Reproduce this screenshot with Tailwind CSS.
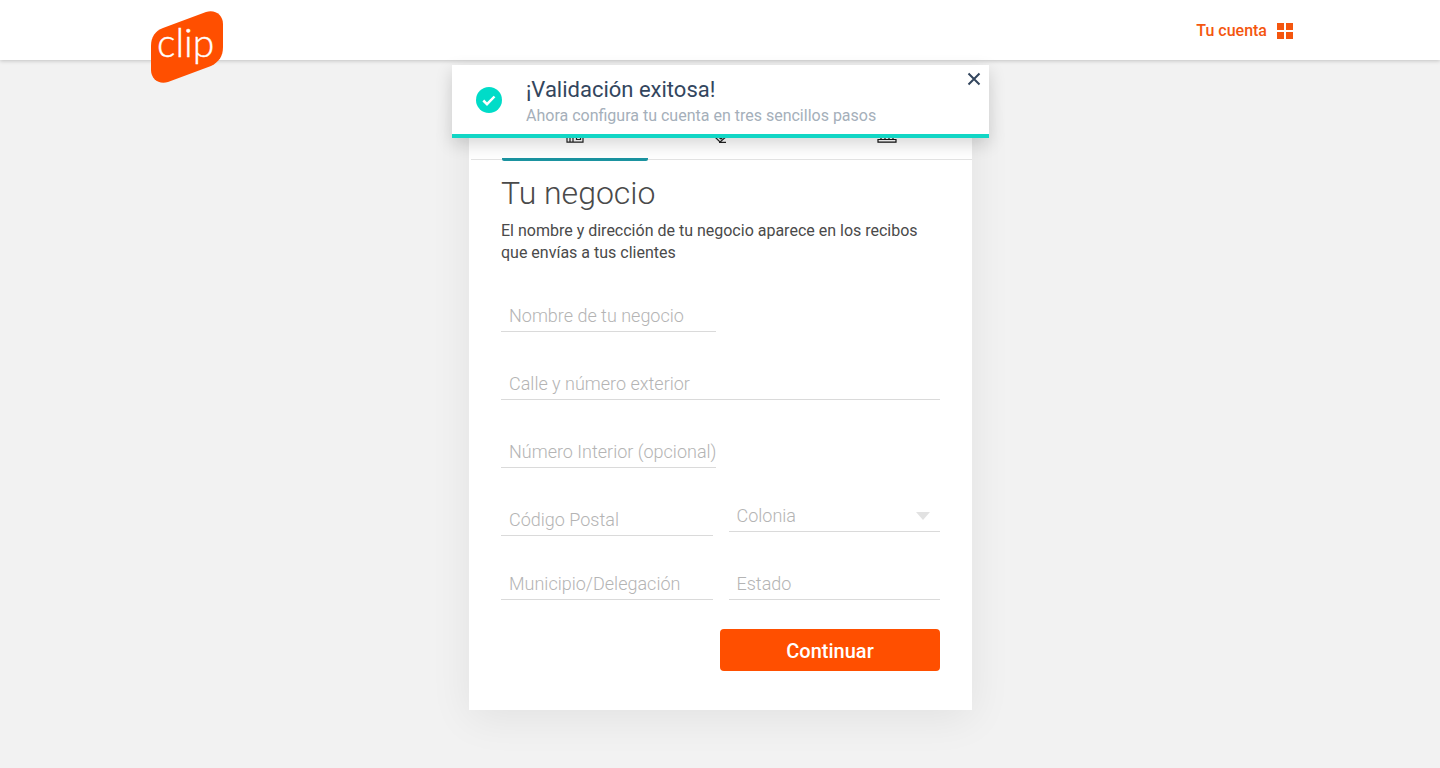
<!DOCTYPE html>
<html lang="es">
<head>
<meta charset="utf-8">
<meta name="viewport" content="width=device-width, initial-scale=1">
<title>Clip - Tu negocio</title>
<script src="https://cdn.jsdelivr.net/npm/@tailwindcss/browser@4"></script>
</head>
<body class="min-h-screen bg-[#f2f2f2] font-['Roboto',sans-serif]">
<header class="relative z-10 h-[60px] bg-white shadow-[0_1px_4px_rgba(0,0,0,0.2)]">
  <div class="mx-auto flex h-full max-w-[1146px] items-center justify-between">
    <a href="#" aria-label="Clip" class="mt-[34px] ml-px">
      <svg class="h-[74px] w-[78px]" viewBox="0 0 78 74">
        <path fill="#ff4f00" d="M15 18 L58 2 C67 -1 75 5 75 14 V37 C75 46 71 52 63 56 L20 72 C11 75 3 69 3 60 V36 C3 27 7 21 15 18 Z"/>
        <text x="9" y="47" font-size="39" stroke="#fff" stroke-width="0.400" class="fill-white font-['Lato',sans-serif] font-light">clip</text>
      </svg>
    </a>
    <a href="#" class="flex items-center gap-[10px] pt-0.5 text-base font-medium text-[#f4560f]">
      <span>Tu cuenta</span>
      <svg class="size-4" viewBox="0 0 16 16" fill="currentColor"><path d="M0 0h7v7H0zM9 0h7v7H9zM0 9h7v7H0zM9 9h7v7H9z"/></svg>
    </a>
  </div>
</header>

<div class="absolute inset-x-0 top-[65px] z-20 pl-px">
  <section role="status" class="mx-auto flex h-[73px] max-w-[537px] justify-between border-b-4 border-[#12d6c5] bg-white shadow-[0_6px_16px_rgba(0,0,0,0.16)]">
    <div class="flex items-center gap-6 pl-6">
      <svg class="size-[26px]" viewBox="0 0 26 26"><circle cx="13" cy="13" r="13" fill="#00dcc8"/><path d="M7.300 13.500l3.700 3.700 7.500-7.700" fill="none" stroke="#fff" stroke-width="2.500"/></svg>
      <div class="pt-1">
        <h2 class="text-[22px] leading-7 text-[#33465e]">¡Validación exitosa!</h2>
        <p class="text-base leading-6 text-[#a5afba]">Ahora configura tu cuenta en tres sencillos pasos</p>
      </div>
    </div>
    <button type="button" aria-label="Cerrar" class="mt-[7px] mr-2 size-[14px] text-[#33465e]">
      <svg class="size-[14px]" viewBox="0 0 14 14" fill="none" stroke="currentColor" stroke-width="2"><path d="M1.500 1.500l11 11M12.500 1.500l-11 11"/></svg>
    </button>
  </section>
</div>

<main class="pt-[30px] pb-[58px] pl-px">
  <div class="mx-auto max-w-[503px] bg-white pb-[39px] shadow-[0_8px_40px_rgba(0,0,0,0.07)]">
    <nav class="ml-0.5 grid h-[70px] grid-cols-3 border-b border-[#e3e3e3] pr-8 pl-[31px]">
      <a href="#" aria-label="Tu negocio" class="flex h-[71px] justify-center rounded-b-xs border-b-3 border-[#1b93a0] pt-[35px]">
        <svg class="h-[18px] w-5" viewBox="0 0 20 18" fill="none" stroke="#222" stroke-width="1.200"><path d="M2 6v11.200h16V6M5 17v-6h3v6M11.500 10.500h4v4h-4zM1 6l2-5h14l2 5z"/></svg>
      </a>
      <a href="#" aria-label="Ubicación" class="flex justify-center pt-[35px]">
        <svg class="h-[18px] w-5" viewBox="0 0 20 18" fill="none" stroke="#222" stroke-width="1.200"><path d="M3 11l6 6 7-6M6 11l4 3 3-3M8 17.300h7"/></svg>
      </a>
      <a href="#" aria-label="Cuenta bancaria" class="flex justify-center pt-[35px] pl-10">
        <svg class="h-[18px] w-5" viewBox="0 0 20 18" fill="none" stroke="#111" stroke-width="1.200"><path d="M2 6l8-5 8 5zM4 7v7M8 7v7M12 7v7M16 7v7M2 14.500h16M1 14.500h18v2.700H1z"/></svg>
      </a>
    </nav>
    <form class="px-8">
      <h1 class="pt-[13px] text-[32px] leading-10 font-light text-[#4a4a4a]">Tu negocio</h1>
      <p class="mt-[7px] text-base leading-[22px] text-[#4a4a4a]">El nombre y dirección de tu negocio aparece en los recibos que envías a tus clientes</p>
      <div class="mt-9 flex flex-col gap-9">
        <input aria-label="Nombre de tu negocio" placeholder="Nombre de tu negocio" class="h-8 w-[215px] border-b border-[#dadada] pl-2 text-lg font-light outline-none placeholder:text-[#b4b4b4]">
        <input aria-label="Calle y número exterior" placeholder="Calle y número exterior" class="h-8 w-full border-b border-[#dadada] pl-2 text-lg font-light outline-none placeholder:text-[#b4b4b4]">
        <input aria-label="Número Interior (opcional)" placeholder="Número Interior (opcional)" class="h-8 w-[215px] border-b border-[#dadada] pl-2 text-lg font-light outline-none placeholder:text-[#b4b4b4]">
      </div>
      <div class="mt-8 grid grid-cols-2 gap-x-4 gap-y-8">
        <input aria-label="Código Postal" placeholder="Código Postal" class="mt-1 h-8 w-full border-b border-[#dadada] pl-2 text-lg font-light outline-none placeholder:text-[#b4b4b4]">
        <div class="relative h-8">
          <select aria-label="Colonia" class="h-8 w-full appearance-none border-b border-[#dadada] pl-2 text-lg font-light text-[#b4b4b4] outline-none"><option>Colonia</option></select>
          <svg class="pointer-events-none absolute top-3 right-[10px] h-2 w-[14px]" viewBox="0 0 14 8"><path d="M0 0h14L7 8z" fill="#e2e2e2"/></svg>
        </div>
        <input aria-label="Municipio/Delegación" placeholder="Municipio/Delegación" class="h-8 w-full border-b border-[#dadada] pl-2 text-lg font-light outline-none placeholder:text-[#b4b4b4]">
        <input aria-label="Estado" placeholder="Estado" class="h-8 w-full border-b border-[#dadada] pl-2 text-lg font-light outline-none placeholder:text-[#b4b4b4]">
      </div>
      <button type="submit" class="mt-[29px] ml-auto block h-[42px] w-[220px] rounded bg-[#ff4f00] pt-0.5 text-xl font-medium text-white">Continuar</button>
    </form>
  </div>
</main>
</body>
</html>
